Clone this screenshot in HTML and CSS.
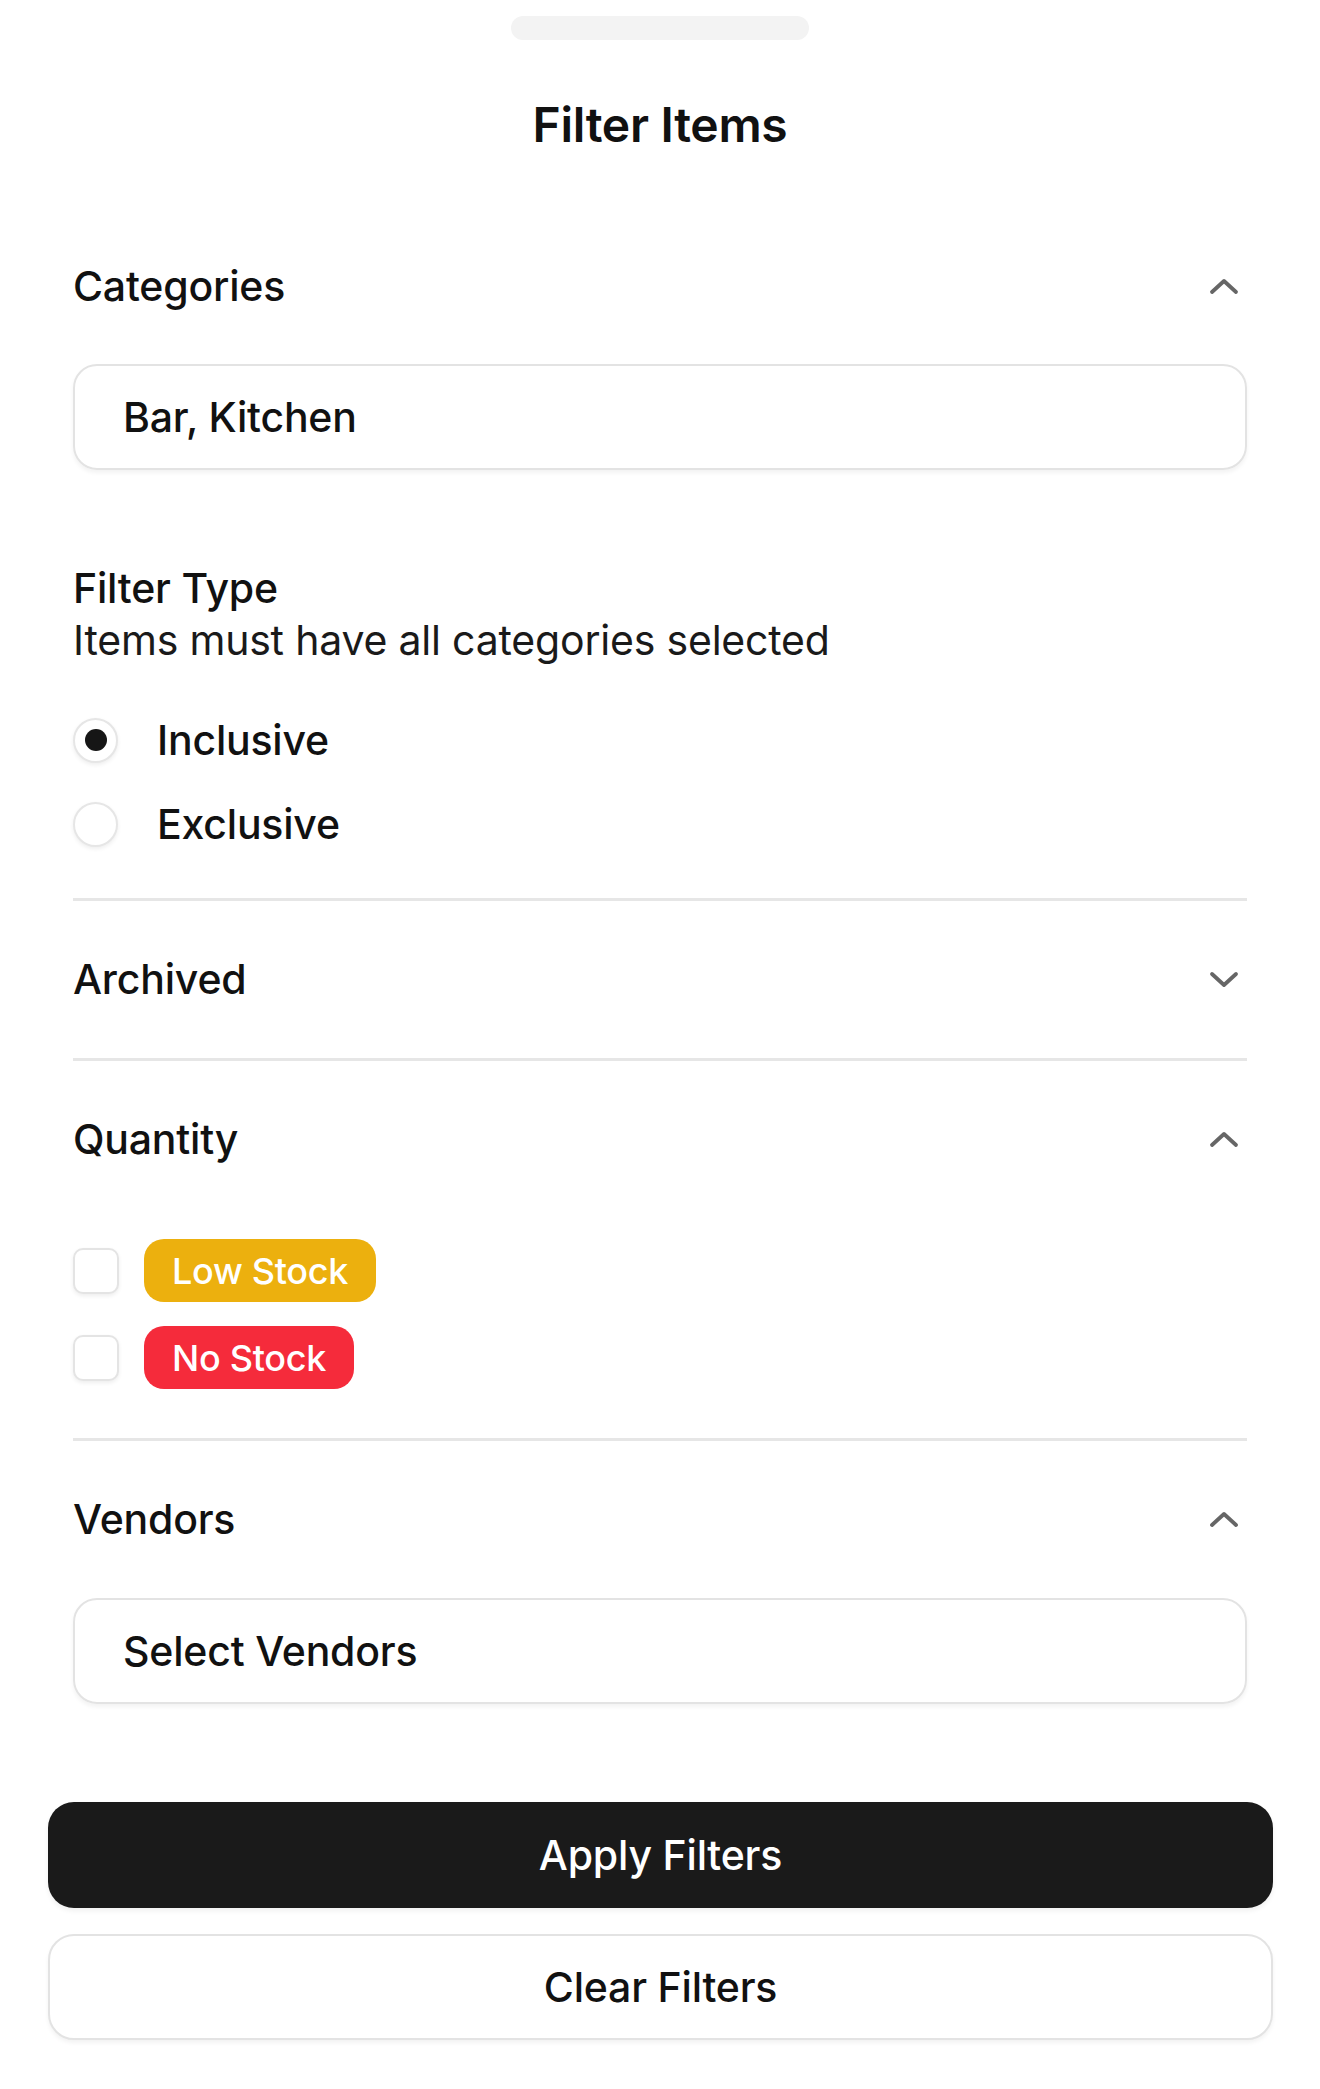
FILE: index.html
```html
<!DOCTYPE html>
<html lang="en">
<head>
<meta charset="utf-8">
<title>Filter Items</title>
<link rel="stylesheet" href="styles.css">
</head>
<body>
<div class="sheet">
  <div class="handle"></div>
  <h1 class="title">Filter Items</h1>

  <section class="section first">
    <div class="section-head">
      <span class="section-label">Categories</span>
      <svg class="chev" viewBox="0 0 30 17" width="30" height="17"><polyline points="3,14 15,3 27,14"/></svg>
    </div>
    <div class="field">Bar, Kitchen</div>
    <div class="filter-type">
      <div class="ft-title">Filter Type</div>
      <div class="ft-sub">Items must have all categories selected</div>
    </div>
    <div class="radios">
      <div class="radio-row"><span class="radio checked"></span><span class="radio-label">Inclusive</span></div>
      <div class="radio-row"><span class="radio"></span><span class="radio-label">Exclusive</span></div>
    </div>
  </section>

  <section class="section">
    <div class="section-head">
      <span class="section-label">Archived</span>
      <svg class="chev" viewBox="0 0 30 17" width="30" height="17"><polyline points="3,3 15,14 27,3"/></svg>
    </div>
  </section>

  <section class="section">
    <div class="section-head">
      <span class="section-label">Quantity</span>
      <svg class="chev" viewBox="0 0 30 17" width="30" height="17"><polyline points="3,14 15,3 27,14"/></svg>
    </div>
    <div class="checks">
      <div class="check-row"><span class="checkbox"></span><span class="badge low">Low Stock</span></div>
      <div class="check-row"><span class="checkbox"></span><span class="badge none">No Stock</span></div>
    </div>
  </section>

  <section class="section last">
    <div class="section-head">
      <span class="section-label">Vendors</span>
      <svg class="chev" viewBox="0 0 30 17" width="30" height="17"><polyline points="3,14 15,3 27,14"/></svg>
    </div>
    <div class="field">Select Vendors</div>
  </section>
</div>

<div class="actions">
  <button class="btn primary">Apply Filters</button>
  <button class="btn secondary">Clear Filters</button>
</div>
</body>
</html>
```
FILE: styles.css
```css
* { box-sizing: border-box; }

html, body {
  margin: 0;
  padding: 0;
  background: #ffffff;
}

body {
  font-family: Inter, "Noto Sans", "Liberation Sans", sans-serif;
  color: #111111;
  width: 1320px;
}

.sheet {
  padding: 16px 73px 0;
  display: flex;
  flex-direction: column;
}

.handle {
  width: 298px;
  height: 24px;
  border-radius: 12px;
  background: #f3f3f3;
  align-self: center;
}

.title {
  margin: 56px 0 0;
  font-size: 48px;
  line-height: 58px;
  font-weight: 600;
  text-align: center;
  letter-spacing: -0.3px;
  color: #111111;
}

.section {
  padding: 38px 0 39px;
  border-bottom: 3px solid #e6e6e6;
  display: flex;
  flex-direction: column;
}

.section.first { margin-top: 54px; }

.section.last {
  border-bottom: none;
  padding-bottom: 0;
}

.section-head {
  height: 80px;
  display: flex;
  align-items: center;
  justify-content: space-between;
}

.section-label {
  font-size: 41px;
  font-weight: 500;
  letter-spacing: -0.2px;
}

.chev {
  margin-right: 8px;
  fill: none;
  stroke: #666666;
  stroke-width: 3.8;
  stroke-linecap: round;
  stroke-linejoin: round;
}

.field {
  margin-top: 38px;
  height: 106px;
  border: 2px solid #e3e3e3;
  border-radius: 24px;
  box-shadow: 0 3px 4px rgba(0, 0, 0, 0.05);
  display: flex;
  align-items: center;
  padding-left: 48px;
  font-size: 41px;
  font-weight: 500;
  letter-spacing: -0.2px;
}

.section.last .field { margin-top: 39px; height: 106px; }

.filter-type {
  margin-top: 92px;
  font-size: 41px;
  line-height: 52px;
  letter-spacing: -0.2px;
}

.ft-title { font-weight: 500; }

.ft-sub {
  font-weight: 400;
  color: #1a1a1a;
}

.radios {
  margin-top: 39px;
  display: flex;
  flex-direction: column;
  gap: 14px;
}

.radio-row {
  height: 70px;
  display: flex;
  align-items: center;
  gap: 39px;
}

.radio {
  width: 45px;
  height: 45px;
  border-radius: 50%;
  border: 2px solid #e6e6e6;
  box-shadow: 0 2px 4px rgba(0, 0, 0, 0.07);
  background: #ffffff;
  display: flex;
  align-items: center;
  justify-content: center;
  flex: none;
}

.radio.checked::after {
  content: "";
  width: 22px;
  height: 22px;
  border-radius: 50%;
  background: #161616;
}

.radio-label {
  font-size: 41px;
  font-weight: 500;
  letter-spacing: -0.2px;
}

.checks {
  margin-top: 60px;
  margin-bottom: 10px;
  display: flex;
  flex-direction: column;
  gap: 24px;
}

.check-row {
  height: 63px;
  display: flex;
  align-items: center;
  gap: 25px;
}

.checkbox {
  width: 46px;
  height: 46px;
  border-radius: 10px;
  border: 2px solid #e4e4e4;
  box-shadow: 0 2px 4px rgba(0, 0, 0, 0.07);
  background: #ffffff;
  flex: none;
}

.badge {
  height: 63px;
  border-radius: 20px;
  padding: 0 28px;
  display: flex;
  align-items: center;
  color: #ffffff;
  font-size: 36px;
  font-weight: 500;
  letter-spacing: -0.3px;
}

.badge.low { background: #ecb00e; }
.badge.none { background: #f52b3b; }

.actions {
  margin-top: 98px;
  padding: 0 47px 50px 48px;
  display: flex;
  flex-direction: column;
  gap: 26px;
}

.btn {
  height: 106px;
  border-radius: 26px;
  font-family: Inter, "Noto Sans", "Liberation Sans", sans-serif;
  font-size: 41px;
  font-weight: 500;
  letter-spacing: -0.2px;
  display: flex;
  align-items: center;
  justify-content: center;
  cursor: pointer;
}

.btn.primary {
  background: #1a1a1a;
  color: #ffffff;
  border: none;
  box-shadow: 0 3px 5px rgba(0, 0, 0, 0.06);
}

.btn.secondary {
  background: #ffffff;
  color: #111111;
  border: 2px solid #e3e3e3;
  box-shadow: 0 3px 4px rgba(0, 0, 0, 0.05);
}
```
